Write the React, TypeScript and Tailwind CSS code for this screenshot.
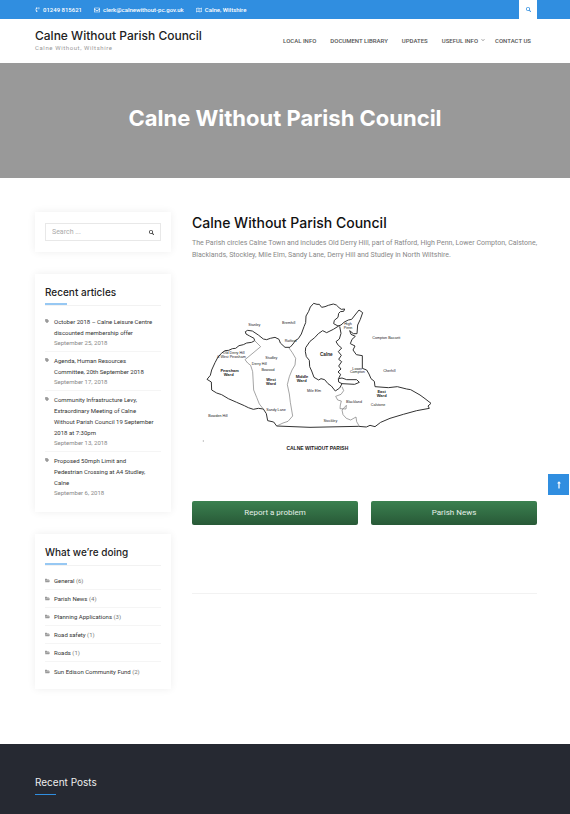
import React from "react";
import { FaSearch, FaTag, FaFolderOpen, FaRegEnvelope, FaRegMap, FaLongArrowAltUp, FaChevronDown, FaPhoneVolume } from "react-icons/fa";

const articles = [
  { lines: ["October 2018 – Calne Leisure Centre", "discounted membership offer"], date: "September 25, 2018" },
  { lines: ["Agenda, Human Resources", "Committee, 20th September 2018"], date: "September 17, 2018" },
  { lines: ["Community Infrastructure Levy,", "Extraordinary Meeting of Calne", "Without Parish Council 19 September", "2018 at 7:30pm"], date: "September 13, 2018" },
  { lines: ["Proposed 50mph Limit and", "Pedestrian Crossing at A4 Studley,", "Calne"], date: "September 6, 2018" },
];

const categories = [
  { name: "General", count: 6 },
  { name: "Parish News", count: 4 },
  { name: "Planning Applications", count: 3 },
  { name: "Road safety", count: 1 },
  { name: "Roads", count: 1 },
  { name: "Sun Edison Community Fund", count: 2 },
];

const places: [string, number, number][] = [
  ["Stanley", 178, 109],
  ["Bremhill", 281, 102],
  ["Ratford", 287, 155],
  ["Old Derry Hill", 116, 191],
  ["& West Pewsham", 109, 203],
  ["Studley", 229, 207],
  ["Derry Hill", 193, 224],
  ["Bowood", 219, 242],
  ["Mile Elm", 357, 306],
  ["Sandy Lane", 243, 363],
  ["Bowden Hill", 69, 382],
  ["Stockley", 406, 397],
  ["High", 459, 104],
  ["Penn", 459, 116],
  ["Compton Bassett", 574, 147],
  ["Lower", 487, 239],
  ["Compton", 487, 250],
  ["Cherhill", 583, 245],
  ["Blackland", 477, 338],
  ["Calstone", 549, 349],
];

const wards: [string, number, number][] = [
  ["Pewsham", 104, 245],
  ["Ward", 101, 257],
  ["West", 228, 272],
  ["Ward", 228, 284],
  ["Middle", 321, 265],
  ["Ward", 320, 277],
  ["East", 560, 309],
  ["Ward", 560, 322],
];

function ParishMap() {
  return (
    <svg viewBox="-9 0 1035 510" className="block w-full" role="img" aria-label="Map of Calne Without parish" fontFamily="'Liberation Sans', Arial, sans-serif" fill="#222">
      <g fill="none" stroke="#333" strokeWidth="3" strokeLinejoin="round">
        <path d="M36 268L46 256L50 240L60 218L68 203L79 190L90 182L101 181L112 176L122 175L132 167L145 164L155 159L170 157L179 152L177 145L164 138L153 132L151 125L158 121L172 123L190 135L205 147L215 149L226 145L240 142L252 148L256 159L270 172L285 172L294 162L301 152L310 146L319 132L327 110L332 98L333 78L341 64L346 51L356 40L366 43L373 43L380 52L390 50L400 46L415 42L424 45L432 53L439 58L449 57L446 64L436 65L431 70L429 82L418 91L416 101L429 108L438 105L448 96L460 90L470 88L480 75L492 60L503 68L496 88L488 105L486 131L475 131L464 122L468 133L481 139L471 148L466 161L480 168L474 180L484 194L502 197L502 235L515 240L522 252L528 266L538 274L540 290L580 293L607 290L635 297L647 299L675 315L690 326L708 340L699 348L703 355L665 362L625 373L585 385L557 397L540 410L525 406L514 411L490 409L345 412L245 408L236 396L218 392L214 371L205 357L190 355L175 358L160 353L148 347L125 337L100 326L80 314L65 309L50 300L49 276Z" />
        <path d="M431 108L415 118L395 128L383 122L370 131L359 143L345 154L332 173L331 185L334 200L343 211L344 230L350 243L357 262L371 270L378 266L389 269L399 281L409 288L421 303L434 294L441 281L431 276L430 266L441 264L455 269L485 269L493 277L479 283L441 281" />
        <path d="M431 265L437 253L429 246L438 237L431 228L440 215L431 208L439 196L430 185L440 174L430 166L423 155L433 147L438 130L434 109" />
      </g>
      <g fill="none" stroke="#777" strokeWidth="2" strokeLinejoin="round">
        <path d="M179 152L197 170L150 209L158 219L167 226L173 245L176 300L185 322L193 342L205 357" />
        <path d="M282 174L292 188L302 205L300 225L291 240L283 260L277 284L283 312L286 337L293 378L279 394L264 399L245 408" />
        <path d="M441 290L446 302L438 313L422 319L428 330L439 333L436 345L435 356L453 357L454 346L441 360L444 374L454 385L467 390L483 381L485 395L493 409" />
      </g>
      <g fontSize="11" textAnchor="middle">
        {places.map(([name, x, y]) => (
          <text key={name} x={x} y={y}>{name}</text>
        ))}
      </g>
      <g fontSize="12" fontWeight="700" textAnchor="middle">
        {wards.map(([name, x, y]) => (
          <text key={name + x} x={x} y={y}>{name}</text>
        ))}
        <text x="394" y="199" fontSize="14">Calne</text>
        <text x="367" y="480" fontSize="15">CALNE WITHOUT PARISH</text>
      </g>
      <circle cx="25" cy="453" r="2" fill="#aaa" />
    </svg>
  );
}

function Card({ title, children }: { title?: string; children: React.ReactNode }) {
  return (
    <section className="bg-white px-[10px] py-[11px] shadow-[0_0_8px_rgba(0,0,0,0.07)]">
      {title && (
        <div className="mb-[10px] border-b border-[#f2f2f2] pt-px">
          <h2 className="font-[Inter,sans-serif] text-[10px] leading-3 font-medium text-[#222]">{title}</h2>
          <div className="mt-[5px] h-[2px] w-[22px] bg-[#97c8f3]" />
        </div>
      )}
      {children}
    </section>
  );
}

export default function App() {
  return (
    <div className="min-h-screen bg-white font-[Roboto,sans-serif] text-[6px] text-[#777]">
      <div className="flex h-[19px] items-center justify-between bg-[#308ee0] pr-[33px] pl-[35px] font-medium text-white">
        <div className="flex items-center gap-[12px]">
          <a href="#phone" className="flex items-center gap-[3px]"><FaPhoneVolume size={5} />01249 815621</a>
          <a href="#email" className="flex items-center gap-[3px]"><FaRegEnvelope size={6} />clerk@calnewithout-pc.gov.uk</a>
          <span className="flex items-center gap-[3px]"><FaRegMap size={6} />Calne, Wiltshire</span>
        </div>
        <button aria-label="Open search" className="flex h-full w-[18px] items-center justify-center bg-white text-[#308ee0]"><FaSearch size={5} /></button>
      </div>

      <header className="flex h-[44px] items-center justify-between pr-[39px] pb-[2px] pl-[35px]">
        <div>
          <a href="#home" className="block font-[Inter,sans-serif] text-[12px] leading-[14px] font-medium text-[#222]">Calne Without Parish Council</a>
          <p className="mt-px text-[6px] leading-2 tracking-widest text-[#999]">Calne Without, Wiltshire</p>
        </div>
        <nav className="flex items-center gap-[14px] font-medium text-[#555]">
          <a href="#local">LOCAL INFO</a>
          <a href="#documents">DOCUMENT LIBRARY</a>
          <a href="#updates">UPDATES</a>
          <div className="flex items-center gap-[10px]">
            <a href="#useful" className="flex items-center gap-[3px]">USEFUL INFO <FaChevronDown size={4} className="text-[#999]" /></a>
            <a href="#contact">CONTACT US</a>
          </div>
        </nav>
      </header>

      <div className="flex h-[115px] items-center justify-center bg-[#999] pb-[6px]">
        <h1 className="font-[Inter,sans-serif] text-[22px] leading-7 font-bold text-white">Calne Without Parish Council</h1>
      </div>

      <div className="grid grid-cols-[136px_1fr] gap-[21px] pt-[34px] pr-[33px] pb-[55px] pl-[35px]">
        <aside className="flex flex-col gap-[22px]">
          <Card>
            <form className="flex h-[18px] items-center border border-[#e8e8e8] px-[6px]">
              <input type="search" aria-label="Search" placeholder="Search ..." className="w-full min-w-0 text-[7px] outline-none placeholder:text-[#aaa]" />
              <button type="submit" aria-label="Search" className="text-[#333]"><FaSearch size={5} /></button>
            </form>
          </Card>
          <Card title="Recent articles">
            <ul className="divide-y divide-[#f5f5f5]">
              {articles.map((a) => (
                <li key={a.date} className="flex gap-[5px] pb-[4px] not-first:pt-[3px]">
                  <FaTag size={4} className="mt-[3px] shrink-0 text-[#999]" />
                  <div>
                    <a href="#article" className="block leading-[11px] whitespace-nowrap text-[#333]">
                      {a.lines.map((line) => (
                        <span key={line} className="block">{line}</span>
                      ))}
                    </a>
                    <time className="block leading-[9px] text-[#888]">{a.date}</time>
                  </div>
                </li>
              ))}
            </ul>
          </Card>
          <Card title="What we’re doing">
            <ul className="-mt-1 -mb-[2px] divide-y divide-[#f5f5f5]">
              {categories.map((c) => (
                <li key={c.name} className="flex h-[18px] items-center gap-[4px]">
                  <FaFolderOpen size={5} className="text-[#999]" />
                  <span><a href="#category" className="text-[#333]">{c.name}</a> ({c.count})</span>
                </li>
              ))}
            </ul>
          </Card>
        </aside>

        <main className="min-w-0">
          <h2 className="mt-[2px] font-[Inter,sans-serif] text-[14px] leading-[18px] font-medium text-[#111]">Calne Without Parish Council</h2>
          <p className="-mr-2 mt-[5px] text-[7px] leading-3 text-[#888]">
            The Parish circles Calne Town and includes Old Derry Hill, part of Ratford, High Penn, Lower Compton, Calstone,{" "}
            <br />
            Blacklands, Stockley, Mile Elm, Sandy Lane, Derry Hill and Studley in North Wiltshire.
          </p>
          <div className="mt-[29px]"><ParishMap /></div>
          <div className="mt-[41px] grid grid-cols-2 gap-[13px] text-[8px] text-[#e5efe8]">
            <button className="h-[24px] rounded-xs bg-linear-to-b from-[#3b8150] to-[#285937]">Report a problem</button>
            <button className="h-[24px] rounded-xs bg-linear-to-b from-[#3b8150] to-[#285937]">Parish News</button>
          </div>
          <hr className="mt-[68px] border-[#f2f2f2]" />
        </main>
      </div>

      <footer className="bg-[#262932] pt-[31px] pr-[33px] pb-[19px] pl-[35px]">
        <h2 className="font-[Inter,sans-serif] text-[10px] leading-[14px] text-[#eee]">Recent Posts</h2>
        <div className="mt-[5px] h-px w-[21px] bg-[#308ee0]" />
      </footer>

      <a href="#top" aria-label="Back to top" className="fixed top-[474px] right-[1px] flex h-[21px] w-[21px] items-center justify-center bg-[#308ee0] text-white"><FaLongArrowAltUp size={8} /></a>
    </div>
  );
}
